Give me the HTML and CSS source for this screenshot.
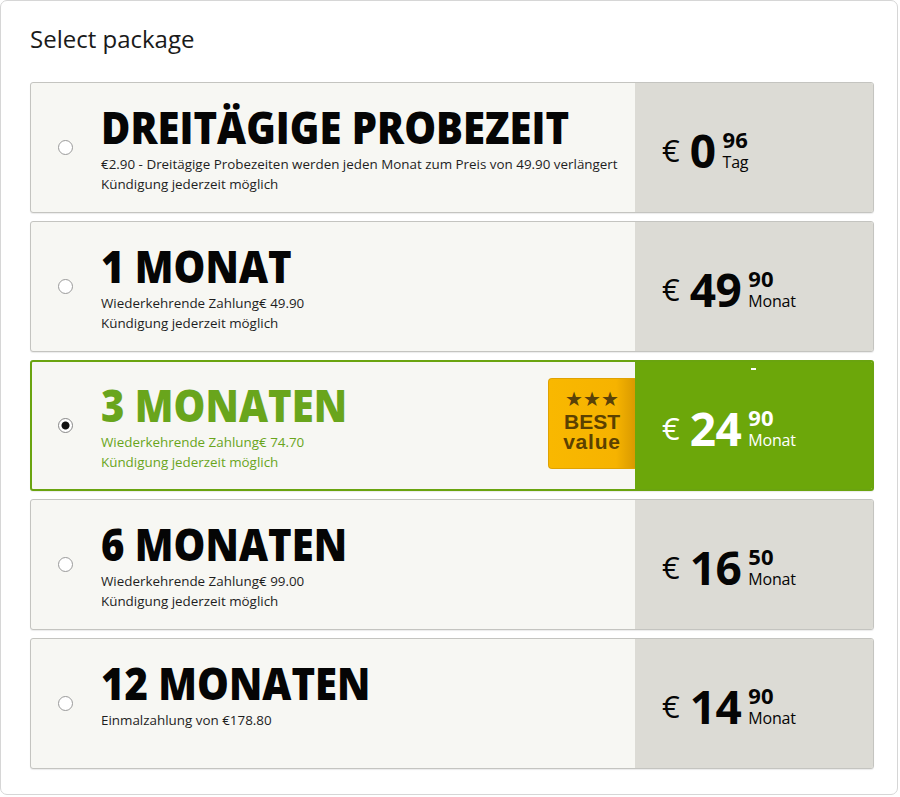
FILE: index.html
```html
<!DOCTYPE html>
<html>
<head>
<meta charset="utf-8">
<link rel="stylesheet" href="styles.css">
</head>
<body>
<div class="frame">
  <h1 class="heading">Select package</h1>
  <div class="list">
    <div class="card">
      <div class="info">
        <span class="radio"></span>
        <div class="text">
          <div class="title">DREITÄGIGE PROBEZEIT</div>
          <div class="desc">€2.90 - Dreitägige Probezeiten werden jeden Monat zum Preis von 49.90 verlängert</div>
          <div class="desc">Kündigung jederzeit möglich</div>
        </div>
      </div>
      <div class="price">
        <span class="cur">€</span><span class="big">0</span>
        <span class="small"><span class="cents">96</span><span class="unit">Tag</span></span>
      </div>
    </div>
    <div class="card">
      <div class="info">
        <span class="radio"></span>
        <div class="text">
          <div class="title">1 MONAT</div>
          <div class="desc">Wiederkehrende Zahlung€ 49.90</div>
          <div class="desc">Kündigung jederzeit möglich</div>
        </div>
      </div>
      <div class="price">
        <span class="cur">€</span><span class="big">49</span>
        <span class="small"><span class="cents">90</span><span class="unit">Monat</span></span>
      </div>
    </div>
    <div class="card selected">
      <div class="info">
        <span class="radio checked"></span>
        <div class="text">
          <div class="title">3 MONATEN</div>
          <div class="desc">Wiederkehrende Zahlung€ 74.70</div>
          <div class="desc">Kündigung jederzeit möglich</div>
        </div>
      </div>
      <div class="badge">
        <div class="stars">★★★</div>
        <div class="best">BEST</div>
        <div class="value">value</div>
      </div>
      <div class="price">
        <span class="dash"></span>
        <span class="cur">€</span><span class="big">24</span>
        <span class="small"><span class="cents">90</span><span class="unit">Monat</span></span>
      </div>
    </div>
    <div class="card">
      <div class="info">
        <span class="radio"></span>
        <div class="text">
          <div class="title">6 MONATEN</div>
          <div class="desc">Wiederkehrende Zahlung€ 99.00</div>
          <div class="desc">Kündigung jederzeit möglich</div>
        </div>
      </div>
      <div class="price">
        <span class="cur">€</span><span class="big">16</span>
        <span class="small"><span class="cents">50</span><span class="unit">Monat</span></span>
      </div>
    </div>
    <div class="card">
      <div class="info">
        <span class="radio"></span>
        <div class="text">
          <div class="title">12 MONATEN</div>
          <div class="desc">Einmalzahlung von €178.80</div>
        </div>
      </div>
      <div class="price">
        <span class="cur">€</span><span class="big">14</span>
        <span class="small"><span class="cents">90</span><span class="unit">Monat</span></span>
      </div>
    </div>
  </div>
</div>
</body>
</html>
```
FILE: styles.css
```css
html, body {
  margin: 0;
  padding: 0;
  background: #ffffff;
}
body {
  font-family: "Open Sans", "Liberation Sans", sans-serif;
  color: #111;
}
.frame {
  box-sizing: border-box;
  width: 898px;
  height: 795px;
  border: 1px solid #d6d6d6;
  border-radius: 7px;
  padding: 21px 25px 0 29px;
}
.heading {
  margin: 0 0 26px 0;
  font-size: 24px;
  font-weight: 400;
  line-height: 34px;
  color: #1a1a1a;
}
.list {
  display: flex;
  flex-direction: column;
  gap: 8px;
}
.card {
  position: relative;
  box-sizing: border-box;
  width: 844px;
  height: 131px;
  display: flex;
  border: 1px solid #c4c4c0;
  border-radius: 3px;
  background: #f7f7f3;
  box-shadow: 0 1px 1px rgba(0,0,0,0.08);
  overflow: hidden;
}
.info {
  flex: 1;
  display: flex;
  align-items: flex-start;
  padding: 21px 0 0 27px;
}
.radio {
  box-sizing: border-box;
  width: 15px;
  height: 15px;
  border: 1px solid #9a9a9a;
  border-radius: 50%;
  background: #fff;
  margin-top: 36px;
  margin-right: 28px;
  flex: none;
}
.radio.checked {
  border-color: #888;
  background: radial-gradient(circle, #111 0 3.5px, #fff 4.5px);
}
.title {
  font-size: 45px;
  font-weight: 800;
  letter-spacing: 0;
  line-height: 46px;
  color: #050505;
  white-space: nowrap;
  transform: scaleX(0.89);
  transform-origin: left center;
}
.desc {
  font-size: 13.4px;
  line-height: 20px;
  color: #1e1e1e;
  white-space: nowrap;
}
.title + .desc {
  margin-top: 4px;
}
.price {
  position: relative;
  width: 238px;
  flex: none;
  background: #dcdbd5;
  display: flex;
  align-items: center;
  padding-left: 27px;
  box-sizing: border-box;
  color: #050505;
}
.cur {
  font-size: 31px;
  font-weight: 400;
  margin-right: 10px;
  margin-top: 4px;
}
.big {
  font-size: 46px;
  font-weight: 700;
  letter-spacing: -0.5px;
  margin-top: 4px;
}
.small {
  display: flex;
  flex-direction: column;
  margin-left: 7px;
  margin-top: 2px;
}
.cents {
  font-size: 22px;
  font-weight: 700;
  line-height: 24px;
}
.unit {
  font-size: 16px;
  line-height: 18px;
  margin-top: 2px;
  letter-spacing: -0.2px;
}
.selected {
  border: 2px solid #6aa40f;
}
.selected .info {
  padding-left: 26px;
  padding-top: 20px;
}
.selected .title,
.selected .desc {
  color: #69a51c;
}
.selected .price {
  background: #6ca70a;
  color: #ffffff;
  width: 237px;
}
.dash {
  position: absolute;
  top: 6px;
  left: 116px;
  width: 5px;
  height: 2px;
  background: #fff;
}
.badge {
  position: absolute;
  right: 237px;
  top: 16px;
  width: 87px;
  height: 91px;
  box-sizing: border-box;
  border-radius: 4px 0 0 4px;
  background: linear-gradient(to right, #f9b800 0%, #f6b300 78%, #d99a00 100%);
  border: 1px solid #e0a200;
  border-right: none;
  color: #5b4100;
  font-family: "Liberation Sans", Arial, sans-serif;
  font-weight: 700;
  text-align: center;
  display: flex;
  flex-direction: column;
  align-items: center;
  padding-top: 10px;
}
.stars {
  font-family: "DejaVu Sans", sans-serif;
  font-size: 20px;
  line-height: 20px;
  letter-spacing: 0px;
  color: #5a4208;
}
.best {
  font-size: 21px;
  line-height: 20px;
  margin-top: 3px;
}
.value {
  font-size: 21px;
  line-height: 20px;
  letter-spacing: 0.8px;
}
```
